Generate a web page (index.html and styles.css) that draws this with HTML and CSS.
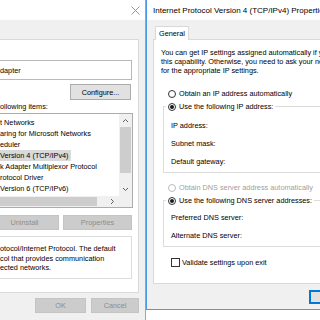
FILE: index.html
```html
<!DOCTYPE html>
<html lang="en">
<head>
    <meta charset="UTF-8">
    <meta name="viewport" content="width=device-width, initial-scale=1.0">
    <title>Ethernet Properties</title>
    <link rel="stylesheet" href="styles.css">
</head>
<body>
<div class="desktop">

    <!-- parent dialog, mostly off to the left -->
    <div class="window eth">
        <div class="titlebar">
            <svg class="close" width="9" height="9" viewBox="0 0 9 9">
                <path d="M0.5 0.5 L8.5 8.5 M8.5 0.5 L0.5 8.5" stroke="#8a8a8a" stroke-width="0.9" fill="none"/>
            </svg>
        </div>
        <div class="eth-body">
            <div class="tabpage">
                <div class="textbox">dapter</div>
                <div class="configure-row">
                    <button class="btn configure">Configure...</button>
                </div>
                <div class="items-label">ollowing items:</div>
                <div class="listbox">
                    <ul class="items">
                        <li><span>t Networks</span></li>
                        <li><span>aring for Microsoft Networks</span></li>
                        <li><span>eduler</span></li>
                        <li class="selected"><span>Version 4 (TCP/IPv4)</span></li>
                        <li><span>k Adapter Multiplexor Protocol</span></li>
                        <li><span>rotocol Driver</span></li>
                        <li><span>Version 6 (TCP/IPv6)</span></li>
                    </ul>
                    <div class="vscroll">
                        <div class="sb-arrow">
                            <svg width="7" height="5" viewBox="0 0 7 5"><polyline points="1,4 3.5,1.5 6,4" stroke="#606060" fill="none"/></svg>
                        </div>
                        <div class="sb-thumb-v"></div>
                        <div class="sb-track"></div>
                        <div class="sb-arrow">
                            <svg width="7" height="5" viewBox="0 0 7 5"><polyline points="1,1 3.5,3.5 6,1" stroke="#606060" fill="none"/></svg>
                        </div>
                    </div>
                    <div class="hscroll">
                        <div class="sb-arrow-h"></div>
                        <div class="sb-thumb-h"></div>
                        <div class="sb-track"></div>
                        <div class="sb-arrow-h">
                            <svg width="5" height="7" viewBox="0 0 5 7"><polyline points="1,1 3.5,3.5 1,6" stroke="#606060" fill="none"/></svg>
                        </div>
                    </div>
                    <div class="sb-corner"></div>
                </div>
                <div class="item-buttons">
                    <button class="btn off">Install...</button>
                    <button class="btn off">Uninstall</button>
                    <button class="btn off">Properties</button>
                </div>
                <div class="description">
                    otocol/Internet Protocol. The default<br>
                    col that provides communication<br>
                    ected networks.
                </div>
            </div>
            <div class="dialog-buttons">
                <button class="btn off ok">OK</button>
                <button class="btn off cancel">Cancel</button>
            </div>
        </div>
    </div>

    <!-- active child dialog -->
    <div class="window ipv4">
        <div class="titlebar">Internet Protocol Version 4 (TCP/IPv4) Properties</div>
        <div class="ipv4-body">
            <div class="tabs">
                <div class="tab">General</div>
            </div>
            <div class="tabpage-v4">
                <p class="intro">
                    You can get IP settings assigned automatically if your network supports<br>
                    this capability. Otherwise, you need to ask your network administrator<br>
                    for the appropriate IP settings.
                </p>

                <div class="option first"><span class="radio"></span>Obtain an IP address automatically</div>
                <fieldset class="group">
                    <legend class="option"><span class="radio on"></span>Use the following IP address:</legend>
                    <div class="field">IP address:</div>
                    <div class="field">Subnet mask:</div>
                    <div class="field">Default gateway:</div>
                </fieldset>

                <div class="option gap disabled"><span class="radio"></span>Obtain DNS server address automatically</div>
                <fieldset class="group dns">
                    <legend class="option"><span class="radio on"></span>Use the following DNS server addresses:</legend>
                    <div class="field">Preferred DNS server:</div>
                    <div class="field">Alternate DNS server:</div>
                </fieldset>

                <div class="check-row"><span class="checkbox"></span>Validate settings upon exit</div>
            </div>
            <div class="v4-buttons">
                <button class="btn default">OK</button>
                <button class="btn">Cancel</button>
            </div>
        </div>
    </div>

</div>
</body>
</html>
```

FILE: styles.css
```css
* {
    box-sizing: border-box;
}
body {
    margin: 0;
    background: #ffffff;
    font-family: "Liberation Sans", Arial, sans-serif;
    font-size: 7.3px;
    color: #000;
}
.desktop {
    position: relative;
    width: 320px;
    height: 320px;
    overflow: hidden;
    background: #ffffff;
}
.window {
    position: absolute;
    top: 0;
    background: #f0f0f0;
}
.titlebar {
    height: 20px;
    background: #ffffff;
    display: flex;
    align-items: center;
    white-space: nowrap;
}
.btn {
    font-family: inherit;
    font-size: 7.3px;
    color: #000;
    background: #e1e1e1;
    border: 1px solid #adadad;
    padding: 0;
    margin: 0;
}
.btn.off {
    background: #cccccc;
    border-color: #c4c4c4;
    color: #8d8d8d;
}

/* ---------- Ethernet Properties ---------- */
.eth {
    left: -10px;
    width: 156px;
    height: 340px;
    border-right: 1px solid #a3a3a3;
}
.eth .titlebar {
    justify-content: flex-end;
    padding-right: 5px;
}
.eth-body {
    padding: 19px 6px 20px 0;
}
.tabpage {
    background: #ffffff;
    border: 1px solid #d9d9d9;
    padding: 20px 6px 13px 4px;
}
.textbox {
    height: 20px;
    border: 1px solid #b9b9b9;
    padding-left: 4px;
    display: flex;
    align-items: center;
}
.configure-row {
    display: flex;
    justify-content: flex-end;
    margin-top: 4px;
    padding-right: 1px;
}
.configure {
    width: 61px;
    height: 16px;
}
.items-label {
    margin-top: 2px;
    height: 10px;
    line-height: 10px;
    padding-left: 5px;
}
.listbox {
    margin: 1px -1px 0 -30px;
    height: 95px;
    border: 1px solid #acacac;
    display: grid;
    grid-template-columns: 1fr 13px;
    grid-template-rows: 1fr 11px;
}
.items {
    list-style: none;
    margin: 0;
    padding: 3px 0 0 32px;
    white-space: nowrap;
    overflow: hidden;
}
.items li {
    height: 11px;
    line-height: 11px;
}
.items li span {
    display: inline-block;
    padding: 0 2px;
}
.items li.selected span {
    background: #d9d9d9;
}
.vscroll {
    background: #f0f0f0;
    display: flex;
    flex-direction: column;
}
.sb-arrow {
    height: 13px;
    display: flex;
    align-items: center;
    justify-content: center;
}
.sb-thumb-v {
    height: 46px;
    margin: 0 1px;
    background: #cdcdcd;
}
.sb-track {
    flex: 1;
}
.hscroll {
    background: #f0f0f0;
    display: flex;
}
.sb-arrow-h {
    width: 13px;
    display: flex;
    align-items: center;
    justify-content: center;
}
.sb-thumb-h {
    width: 118px;
    margin: 1px 0;
    background: #cdcdcd;
}
.sb-corner {
    background: #f0f0f0;
}
.item-buttons {
    display: flex;
    justify-content: flex-end;
    gap: 4px;
    margin-top: 7px;
}
.item-buttons .btn {
    width: 69px;
    height: 15px;
    flex: none;
}
.description {
    margin: 6px 0 0 -30px;
    height: 43px;
    border: 1px solid #dcdcdc;
    padding: 7px 0 0 34px;
    line-height: 9.5px;
    white-space: nowrap;
}
.dialog-buttons {
    display: flex;
    justify-content: flex-end;
    gap: 5px;
    margin-top: 5px;
}
.dialog-buttons .btn {
    height: 15px;
}
.dialog-buttons .ok {
    width: 51px;
}
.dialog-buttons .cancel {
    width: 48px;
}

/* ---------- IPv4 Properties ---------- */
.ipv4 {
    left: 146px;
    width: 271px;
    height: 310px;
    border-left: 1px solid #4a9be6;
    border-bottom: 1px solid #4a9be6;
    border-right: 1px solid #4a9be6;
}
.ipv4 .titlebar {
    padding-left: 6px;
    font-size: 8px;
}
.ipv4-body {
    padding: 6px 6px 5px 6px;
}
.tabs {
    display: flex;
    padding-left: 2px;
}
.tab {
    position: relative;
    z-index: 1;
    height: 14px;
    line-height: 13px;
    margin-bottom: -1px;
    padding: 0 3px;
    background: #ffffff;
    border: 1px solid #d9d9d9;
    border-bottom: none;
}
.tabpage-v4 {
    height: 245px;
    background: #ffffff;
    border: 1px solid #d9d9d9;
    padding: 8px 0 0 7px;
    white-space: nowrap;
    overflow: hidden;
}
.intro {
    margin: 0;
    line-height: 9px;
}
.option {
    height: 13px;
    display: flex;
    align-items: center;
    gap: 3px;
    padding-left: 7px;
}
.option.first {
    margin-top: 12px;
}
.option.gap {
    margin-top: 8px;
}
.option.disabled {
    color: #a0a0a0;
}
.radio {
    width: 8px;
    height: 8px;
    border: 1px solid #333333;
    border-radius: 50%;
    background: #ffffff;
    display: flex;
    align-items: center;
    justify-content: center;
    flex: none;
}
.disabled .radio {
    border-color: #bcbcbc;
}
.radio.on::after {
    content: "";
    width: 4px;
    height: 4px;
    border-radius: 50%;
    background: #1a1a1a;
}
.group {
    margin: 0 0 0 2px;
    border: 1px solid #dcdcdc;
    padding: 3px 0 2px 7px;
    min-width: 0;
}
.group.dns {
    padding-top: 1px;
}
.group legend.option {
    margin-left: -5px;
    padding: 0 2px;
    line-height: 13px;
}
.field {
    height: 18px;
    display: flex;
    align-items: center;
}
.check-row {
    margin-top: 9px;
    height: 13px;
    display: flex;
    align-items: center;
    gap: 2px;
    padding-left: 10px;
}
.checkbox {
    width: 9px;
    height: 9px;
    border: 1px solid #333333;
    background: #ffffff;
    flex: none;
}
.v4-buttons {
    display: flex;
    justify-content: flex-end;
    gap: 5px;
    margin-top: 6px;
}
.v4-buttons .btn {
    width: 48px;
    height: 14px;
}
.v4-buttons .default {
    border-color: #0078d7;
    box-shadow: inset 0 0 0 1px #0078d7;
}
```
